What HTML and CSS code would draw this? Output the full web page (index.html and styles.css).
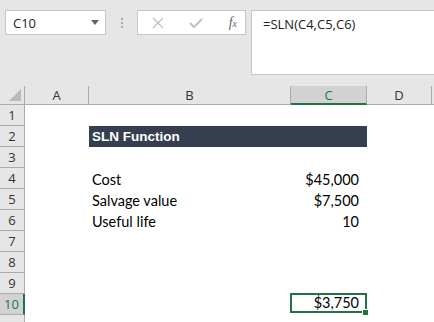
FILE: index.html
```html
<!DOCTYPE html>
<html lang="en">
<head>
    <meta charset="UTF-8">
    <title>SLN Function</title>
    <link rel="stylesheet" href="styles.css">
</head>
<body>
    <!-- Formula bar -->
    <div class="toolbar">
        <div class="namebox">
            <span>C10</span>
            <svg class="caret" width="8" height="5" viewBox="0 0 8 5"><path d="M0 0H8L4 5Z" fill="#666"/></svg>
        </div>
        <div class="grip"><i></i><i></i><i></i></div>
        <div class="fxbox">
            <svg width="12" height="12" viewBox="0 0 12 12"><path d="M1 1L11 11M11 1L1 11" stroke="#c2c2c2" stroke-width="1.4"/></svg>
            <svg width="14" height="12" viewBox="0 0 14 12"><path d="M1 6L5 10L13 2" stroke="#c2c2c2" stroke-width="2" fill="none"/></svg>
            <span class="fx">f<small>x</small></span>
        </div>
        <div class="formula">=SLN(C4,C5,C6)</div>
    </div>

    <!-- Sheet -->
    <div class="sheet">
        <div class="hd corner"><span class="tri"></span></div>
        <div class="hd col">A</div>
        <div class="hd col">B</div>
        <div class="hd col active-col">C</div>
        <div class="hd col">D</div>
        <div class="hd col"></div>

        <div class="hd row">1</div><div></div><div></div><div></div><div></div><div></div>
        <div class="hd row">2</div><div></div><div class="title">SLN Function</div><div class="title"></div><div></div><div></div>
        <div class="hd row">3</div><div></div><div></div><div></div><div></div><div></div>
        <div class="hd row">4</div><div></div><div class="txt">Cost</div><div class="num">$45,000</div><div></div><div></div>
        <div class="hd row">5</div><div></div><div class="txt">Salvage value</div><div class="num">$7,500</div><div></div><div></div>
        <div class="hd row">6</div><div></div><div class="txt">Useful life</div><div class="num">10</div><div></div><div></div>
        <div class="hd row">7</div><div></div><div></div><div></div><div></div><div></div>
        <div class="hd row">8</div><div></div><div></div><div></div><div></div><div></div>
        <div class="hd row">9</div><div></div><div></div><div></div><div></div><div></div>
        <div class="hd row active-row">10</div><div></div><div></div><div class="num selected">$3,750<span class="handle"></span></div><div></div><div></div>
        <div class="hd row"></div><div></div><div></div><div></div><div></div><div></div>
    </div>
</body>
</html>
```

FILE: styles.css
```css
body {
    margin: 0;
    background-color: #fff;
    font-family: "Open Sans", sans-serif;
    overflow: hidden;
}

/* Formula bar */
.toolbar {
    display: flex;
    align-items: flex-start;
    height: 86px;
    padding: 10px 0 0 5px;
    box-sizing: border-box;
    background-color: #e6e6e6;
}

.namebox {
    display: flex;
    align-items: center;
    justify-content: space-between;
    width: 101px;
    height: 25px;
    box-sizing: border-box;
    padding: 0 6px 0 7px;
    background-color: #fff;
    border: 1px solid #c6c6c6;
    font-size: 13px;
    color: #222;
}

.grip {
    display: flex;
    flex-direction: column;
    gap: 2px;
    margin: 8px 14px 0 15px;
}

.grip i {
    width: 2px;
    height: 2px;
    background-color: #aaa;
}

.fxbox {
    display: flex;
    align-items: center;
    justify-content: space-between;
    width: 109px;
    height: 25px;
    box-sizing: border-box;
    padding: 0 8px 0 14px;
    background-color: #fff;
    border: 1px solid #c6c6c6;
}

.fx {
    font-family: "Liberation Serif", serif;
    font-style: italic;
    font-size: 14px;
    color: #666;
}

.fx small {
    font-size: 10px;
}

.formula {
    flex: 1;
    height: 65px;
    margin-left: 5px;
    padding: 4px 0 0 11px;
    box-sizing: border-box;
    background-color: #fff;
    border: 1px solid #c6c6c6;
    border-right: none;
    font-size: 13px;
    color: #222;
}

/* Grid */
.sheet {
    display: grid;
    grid-template-columns: 25px 64px 202px 76px 65px 10px;
    grid-template-rows: 19px repeat(11, 21px);
}

.hd {
    display: flex;
    align-items: center;
    justify-content: center;
    background-color: #e6e6e6;
    color: #333;
    font-size: 13px;
    box-sizing: border-box;
}

.col {
    border-right: 1px solid #ababab;
    border-bottom: 1px solid #ababab;
}

.corner {
    position: relative;
    border-right: 1px solid #ababab;
    border-bottom: 1px solid #ababab;
}

.tri {
    position: absolute;
    right: 3px;
    bottom: 3px;
    width: 0;
    height: 0;
    border-left: 12px solid transparent;
    border-bottom: 12px solid #b9b9b9;
}

.row {
    border-right: 1px solid #ababab;
    border-bottom: 1px solid #ababab;
}

.active-col {
    background-color: #d2d2d2;
    color: #217346;
    border-bottom: 2px solid #217346;
}

.active-row {
    background-color: #d2d2d2;
    color: #217346;
    border-right: 2px solid #217346;
}

.title {
    display: flex;
    align-items: center;
    padding-left: 3px;
    background-color: #353f4f;
    color: #fff;
    font-family: "Liberation Sans", Arial, sans-serif;
    font-weight: bold;
    font-size: 13.5px;
}

.txt,
.num {
    display: flex;
    align-items: flex-end;
    padding-bottom: 1px;
    font-family: Lato, sans-serif;
    font-size: 14.5px;
    color: #000;
}

.txt {
    padding-left: 3px;
}

.num {
    justify-content: flex-end;
    padding-right: 8px;
}

.selected {
    position: relative;
    margin: -1px 0 2px -1px;
    border: 2px solid #217346;
    padding-right: 6px;
    padding-bottom: 0;
}

.handle {
    position: absolute;
    right: -4px;
    bottom: -5px;
    width: 5px;
    height: 5px;
    background-color: #217346;
    border: 1px solid #fff;
}
```
